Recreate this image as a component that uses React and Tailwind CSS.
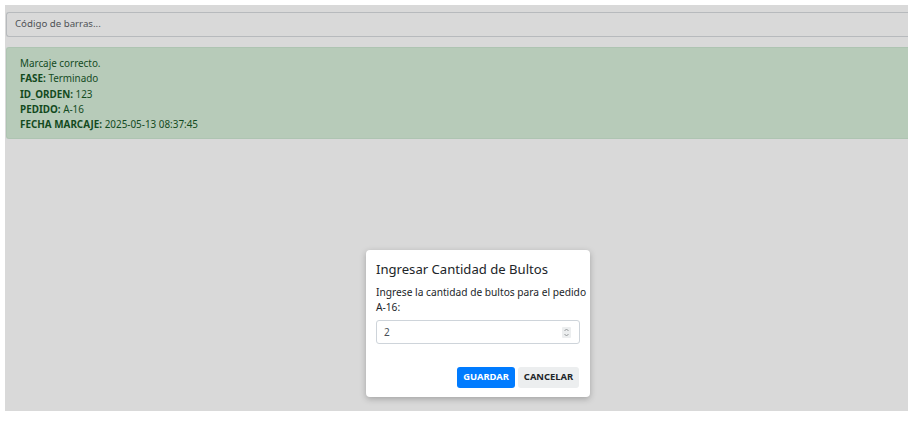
export default function App() {
  return (
    <div className="w-[919px] h-[421px] bg-white relative overflow-hidden" style={{ fontFamily: '"Noto Sans", "Open Sans", sans-serif' }}>
      <div className="absolute left-[5px] top-[5px] w-[903px] h-[406px] bg-[#d9d9d9]">
        <div className="pt-[7px] pl-[1px]">
          <div className="h-[25px] border border-[#b7babd] rounded-l-[3px] border-r-0 flex items-center pl-[8px] text-[9.7px] text-[#4f5256]">
            Código de barras...
          </div>
        </div>
        <div className="mt-[10px] ml-[1px] h-[92px] bg-[#b7cbb9] border border-[#aec4b2] rounded-l-[3px] border-r-0 pl-[13px] pt-[8px] text-[9.9px] leading-[15.25px] text-[#134a1e]">
          <div>Marcaje correcto.</div>
          <div><b>FASE:</b> Terminado</div>
          <div><b>ID_ORDEN:</b> 123</div>
          <div><b>PEDIDO:</b> A-16</div>
          <div><b>FECHA MARCAJE:</b> 2025-05-13 08:37:45</div>
        </div>
      </div>
      <div className="absolute left-[366px] top-[250px] w-[224px] h-[147px] bg-white rounded-[4px] shadow-[0_2px_6px_rgba(0,0,0,0.25)] px-[10px] pt-[9px]">
        <div className="text-[13.1px] text-[#212529] leading-[20px]">Ingresar Cantidad de Bultos</div>
        <div className="mt-[6px] mr-[-9px] text-[10.2px] leading-[15px] text-[#212529]">
          Ingrese la cantidad de bultos para el pedido A-16:
        </div>
        <div className="mt-[5px] h-[24px] border border-[#ced4da] rounded-[3px] flex items-center justify-between pl-[7px] pr-[8px] text-[10px] text-[#495057]">
          <span>2</span>
          <svg width="9" height="11" viewBox="0 0 9 11" className="bg-[#eceeef] rounded-[1px]">
            <path d="M2.5 4 L4.5 2 L6.5 4" fill="none" stroke="#8a8d90" strokeWidth="0.9" />
            <path d="M2.5 7 L4.5 9 L6.5 7" fill="none" stroke="#8a8d90" strokeWidth="0.9" />
          </svg>
        </div>
        <div className="mt-[23px] flex justify-end gap-[3px] pr-[1px]">
          <button className="h-[21px] w-[58px] bg-[#007bff] text-white text-[9.4px] font-bold rounded-[3px]">GUARDAR</button>
          <button className="h-[21px] w-[61px] bg-[#eceeef] text-[#212529] text-[9.4px] font-bold rounded-[3px]">CANCELAR</button>
        </div>
      </div>
    </div>
  );
}
